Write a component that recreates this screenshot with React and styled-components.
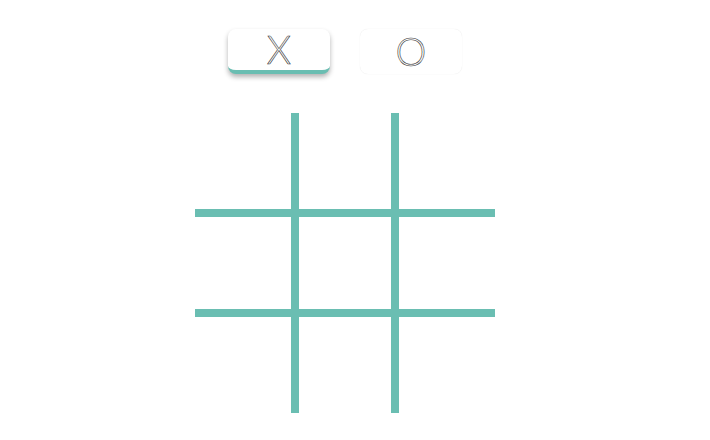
import React, { useState } from "react"
import styled, { createGlobalStyle } from "styled-components"

const GlobalStyle = createGlobalStyle`
  html, body {
    margin: 0;
    padding: 0;
    background: #fff;
    font-family: "Lato", "Open Sans", sans-serif;
    -webkit-font-smoothing: antialiased;
  }
`

const TEAL = "#6abeb2"

const Page = styled.div`
  width: 690px;
  padding-top: 29px;
  display: flex;
  flex-direction: column;
  align-items: center;
`

const Players = styled.div`
  display: flex;
  gap: 30px;
  margin-bottom: 39px;
`

const PlayerButton = styled.button`
  width: 102px;
  height: 45px;
  padding: 0;
  border: none;
  border-radius: 8px;
  background: #fff;
  font-family: "Lato", sans-serif;
  font-weight: 300;
  font-size: 39px;
  color: #fff;
  -webkit-text-stroke: 0.6px #333;
  -webkit-font-smoothing: antialiased;
  cursor: pointer;
  box-sizing: border-box;
  border-bottom: 4px solid ${({ active }) => (active ? TEAL : "transparent")};
  box-shadow: ${({ active }) =>
    active ? "0 3px 5px rgba(0, 0, 0, 0.3)" : "0 0 1px rgba(0, 0, 0, 0.12)"};
  line-height: ${({ active }) => (active ? "41px" : "45px")};
`

const Board = styled.div`
  display: grid;
  grid-template-columns: 96px 92px 96px;
  grid-template-rows: 96px 92px 96px;
  gap: 8px;
  background: ${TEAL};
`

const Cell = styled.div`
  background: #fff;
`

export default function App() {
  const [player, setPlayer] = useState("X")

  return (
    <>
      <GlobalStyle />
      <Page>
        <Players>
          <PlayerButton active={player === "X"} onClick={() => setPlayer("X")}>
            X
          </PlayerButton>
          <PlayerButton active={player === "O"} onClick={() => setPlayer("O")}>
            O
          </PlayerButton>
        </Players>
        <Board>
          {Array.from({ length: 9 }).map((_, i) => (
            <Cell key={i} />
          ))}
        </Board>
      </Page>
    </>
  )
}
